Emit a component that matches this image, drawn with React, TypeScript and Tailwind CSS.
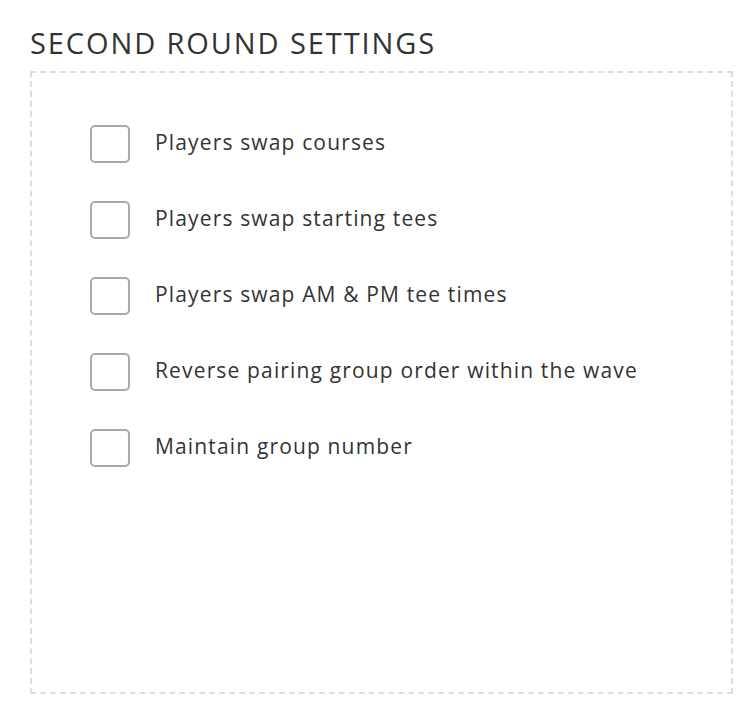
export default function App() {
  const items = [
    "Players swap courses",
    "Players swap starting tees",
    "Players swap AM & PM tee times",
    "Reverse pairing group order within the wave",
    "Maintain group number",
  ];
  return (
    <div className="w-[752px] h-[712px] bg-white pl-[30px] pt-[25px] text-[#333]" style={{ fontFamily: "'Open Sans', sans-serif" }}>
      <h2 className="text-[29px] leading-[36px] h-[46px] tracking-[1.9px]">SECOND ROUND SETTINGS</h2>
      <div className="w-[703px] h-[623px] border-2 border-dashed border-[#dddddd] pl-[58px] pt-[52px]">
        <div className="flex flex-col gap-[38px]">
          {items.map((t) => (
            <label key={t} className="flex items-center h-[38px]">
              <span className="w-[40px] h-[38px] rounded-[5px] border-2 border-[#aaaaaa] bg-white shrink-0" />
              <span className="ml-[25px] text-[21px] leading-[38px] -mt-[4px] tracking-[1.15px]">{t}</span>
            </label>
          ))}
        </div>
      </div>
    </div>
  );
}
